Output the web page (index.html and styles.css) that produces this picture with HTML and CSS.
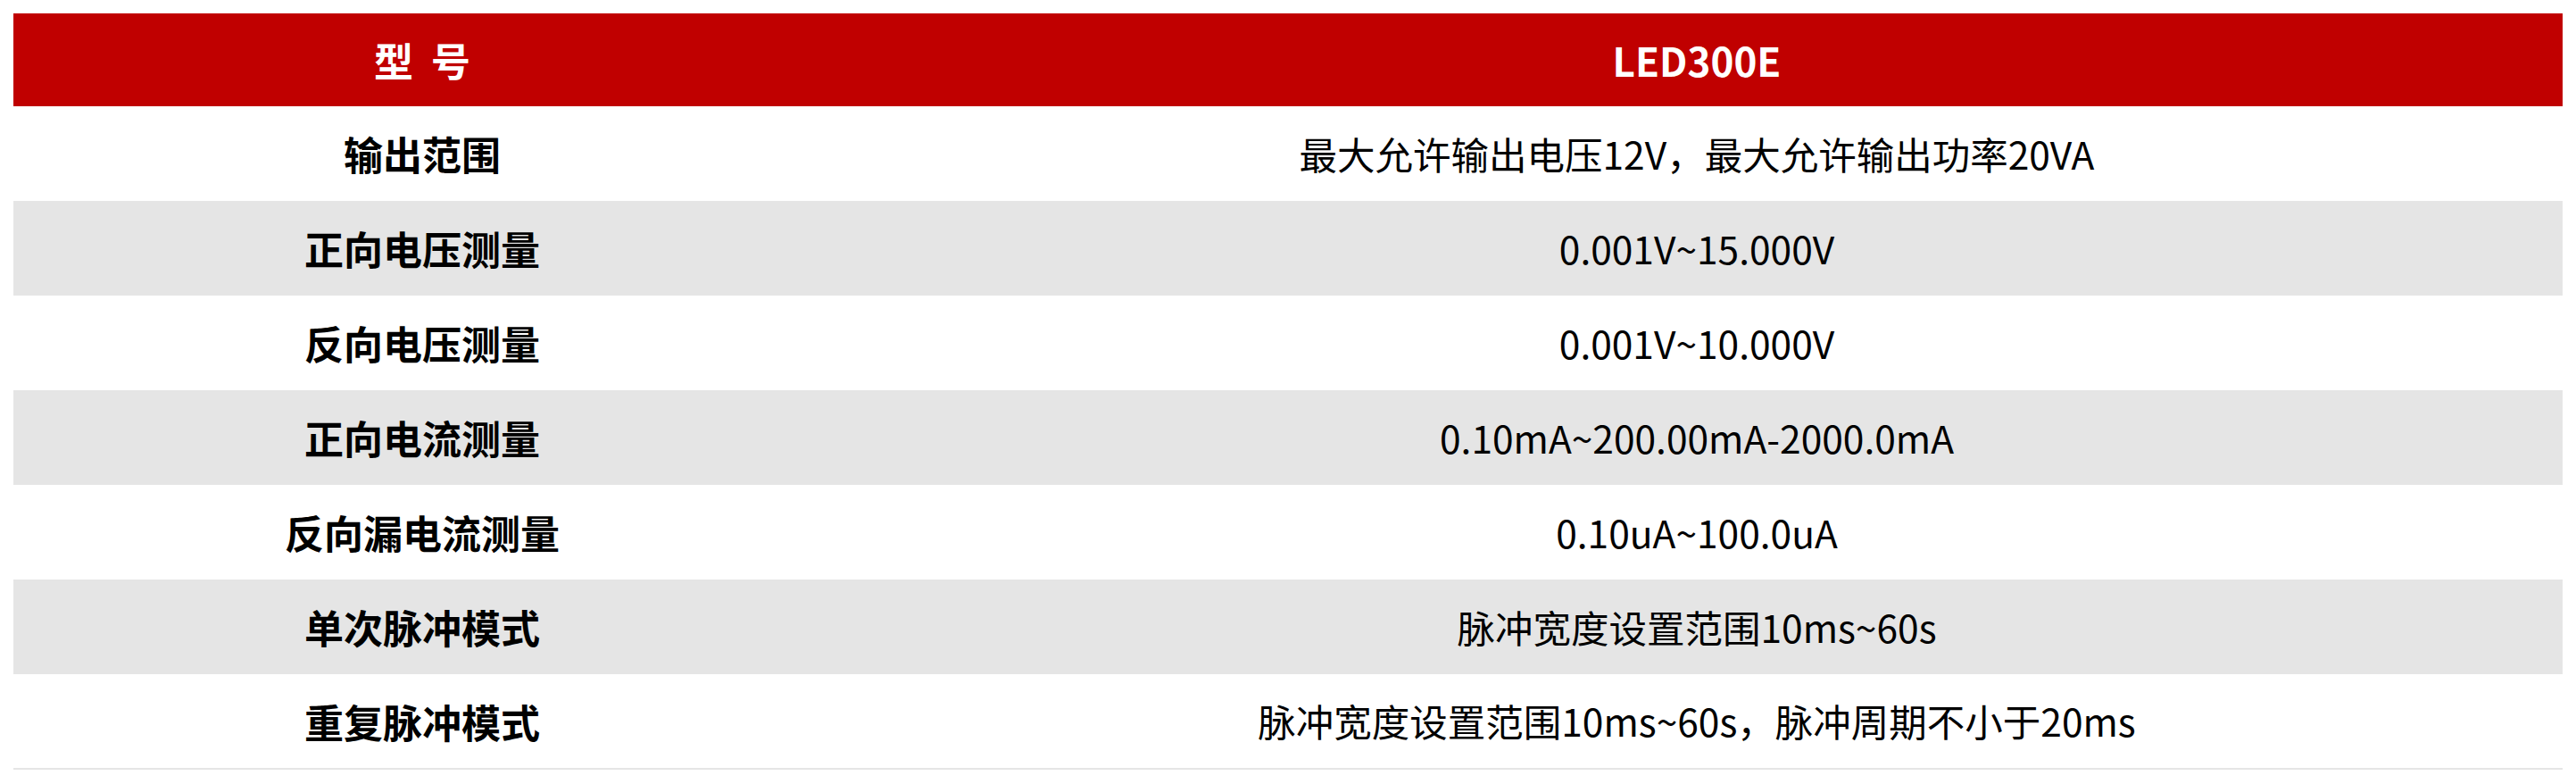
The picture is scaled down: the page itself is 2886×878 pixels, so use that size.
FILE: index.html
```html
<!DOCTYPE html>
<html lang="zh-CN">
<head>
<meta charset="utf-8">
<title>LED300E</title>
<link rel="stylesheet" href="styles.css">
</head>
<body>
<table class="spec">
  <thead>
    <tr class="head">
      <th class="name">型&nbsp;&nbsp;号</th>
      <th class="value">LED300E</th>
    </tr>
  </thead>
  <tbody>
    <tr><td class="name">输出范围</td><td class="value">最大允许输出电压12V，最大允许输出功率20VA</td></tr>
    <tr class="alt"><td class="name">正向电压测量</td><td class="value">0.001V~15.000V</td></tr>
    <tr><td class="name">反向电压测量</td><td class="value">0.001V~10.000V</td></tr>
    <tr class="alt"><td class="name">正向电流测量</td><td class="value">0.10mA~200.00mA-2000.0mA</td></tr>
    <tr><td class="name">反向漏电流测量</td><td class="value">0.10uA~100.0uA</td></tr>
    <tr class="alt"><td class="name">单次脉冲模式</td><td class="value">脉冲宽度设置范围10ms~60s</td></tr>
    <tr class="last"><td class="name">重复脉冲模式</td><td class="value">脉冲宽度设置范围10ms~60s，脉冲周期不小于20ms</td></tr>
  </tbody>
</table>
</body>
</html>
```

FILE: styles.css
```css
html, body {
  margin: 0;
  padding: 0;
  background: #ffffff;
}
body {
  padding: 15px;
  font-family: "Noto Sans CJK SC", "Noto Sans", sans-serif;
  color: #000000;
}
.spec {
  width: 2856px;
  border-collapse: collapse;
  table-layout: fixed;
}
.spec th, .spec td {
  padding: 0;
  text-align: center;
  vertical-align: middle;
  font-size: 44px;
  line-height: 1;
}
.spec .name {
  width: 916px;
  font-weight: 700;
}
.spec td.value {
  font-weight: 400;
  font-size: 42.5px;
}
.head {
  background: #c00000;
  height: 104px;
}
.head th {
  color: #ffffff;
  font-weight: 700;
}
.spec tbody tr {
  height: 106px;
}
.spec tbody tr.alt {
  background: #e5e5e5;
}
.spec tbody tr.last {
  border-bottom: 2px solid #e5e5e5;
}
```
